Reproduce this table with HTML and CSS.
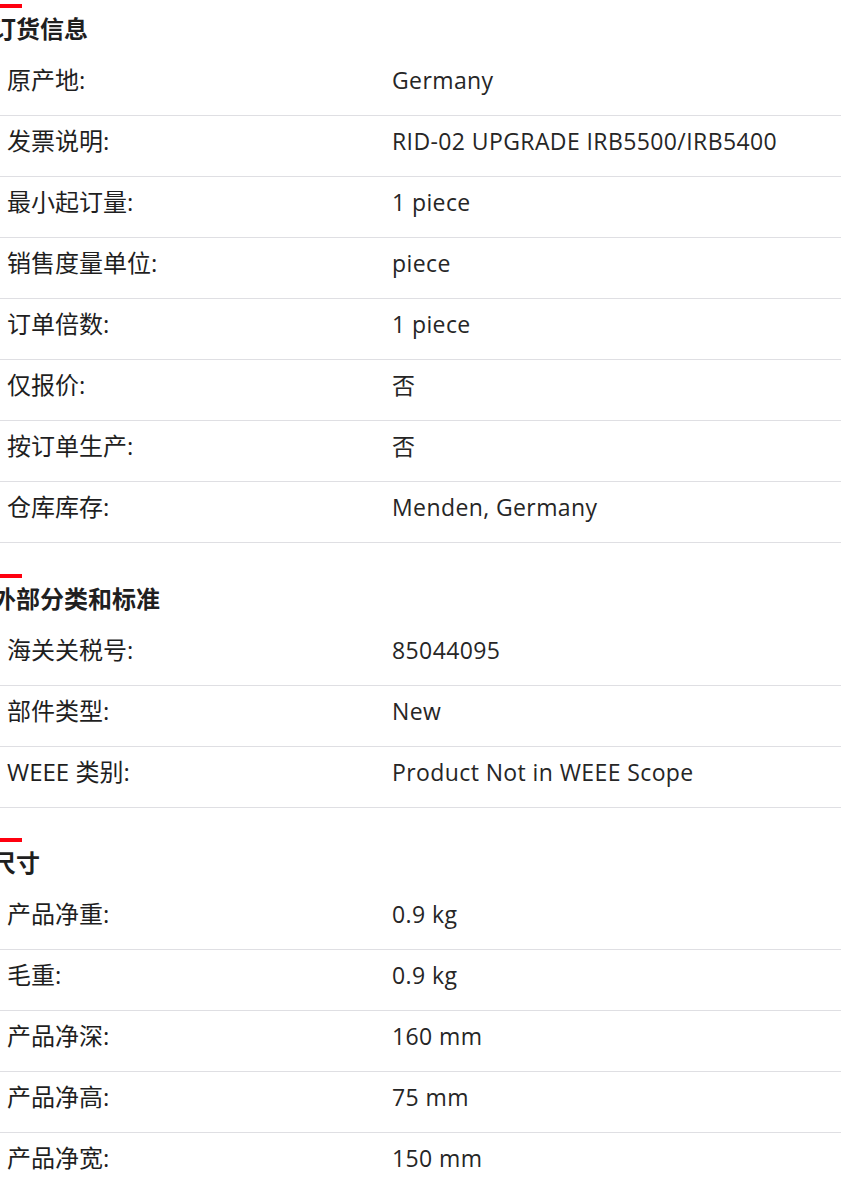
FILE: index.html
```html
<!DOCTYPE html>
<html lang="zh-CN">
<head>
<meta charset="utf-8">
<title>订货信息</title>
<link rel="stylesheet" href="styles.css">
</head>
<body>
<div class="page">
  <section class="section first">
    <div class="bar"></div>
    <h2 class="title">订货信息</h2>
    <div class="row"><div class="label">原产地:</div><div class="value">Germany</div></div>
    <div class="row"><div class="label">发票说明:</div><div class="value">RID-02 UPGRADE IRB5500/IRB5400</div></div>
    <div class="row"><div class="label">最小起订量:</div><div class="value">1 piece</div></div>
    <div class="row"><div class="label">销售度量单位:</div><div class="value">piece</div></div>
    <div class="row"><div class="label">订单倍数:</div><div class="value">1 piece</div></div>
    <div class="row"><div class="label">仅报价:</div><div class="value">否</div></div>
    <div class="row"><div class="label">按订单生产:</div><div class="value">否</div></div>
    <div class="row"><div class="label">仓库库存:</div><div class="value">Menden, Germany</div></div>
  </section>
  <section class="section">
    <div class="bar"></div>
    <h2 class="title">外部分类和标准</h2>
    <div class="row"><div class="label">海关关税号:</div><div class="value">85044095</div></div>
    <div class="row"><div class="label">部件类型:</div><div class="value">New</div></div>
    <div class="row"><div class="label">WEEE 类别:</div><div class="value">Product Not in WEEE Scope</div></div>
  </section>
  <section class="section">
    <div class="bar"></div>
    <h2 class="title">尺寸</h2>
    <div class="row"><div class="label">产品净重:</div><div class="value">0.9 kg</div></div>
    <div class="row"><div class="label">毛重:</div><div class="value">0.9 kg</div></div>
    <div class="row"><div class="label">产品净深:</div><div class="value">160 mm</div></div>
    <div class="row"><div class="label">产品净高:</div><div class="value">75 mm</div></div>
    <div class="row"><div class="label">产品净宽:</div><div class="value">150 mm</div></div>
  </section>
</div>
</body>
</html>
```
FILE: styles.css
```css
html, body {
  margin: 0;
  padding: 0;
  background: #ffffff;
  overflow: hidden;
}

body {
  font-family: "Open Sans", "Noto Sans CJK SC", sans-serif;
  color: #1f1f1f;
}

.page {
  margin-left: -8px;
  width: 849px;
}

.section {
  margin-top: 30.5px;
}

.section.first {
  margin-top: 4px;
}

.bar {
  width: 30px;
  height: 4px;
  background: #ff000f;
}

.title {
  margin: 0;
  padding-bottom: 7px;
  font-size: 24px;
  line-height: 40px;
  font-weight: 700;
  font-family: "Noto Sans CJK SC", sans-serif;
  color: #1f1f1f;
}

.row {
  display: grid;
  grid-template-columns: 385px 1fr;
  padding: 10px 0 20px 15px;
  border-bottom: 1px solid #dfdfe3;
  font-size: 24px;
  line-height: 30px;
}

.label {
  font-family: "Open Sans", "Noto Sans CJK SC", sans-serif;
  font-size: 24px;
}

.value {
  font-family: "Open Sans", "Noto Sans CJK SC", sans-serif;
  font-size: 23px;
  letter-spacing: 0.4px;
  color: #262626;
}
```
